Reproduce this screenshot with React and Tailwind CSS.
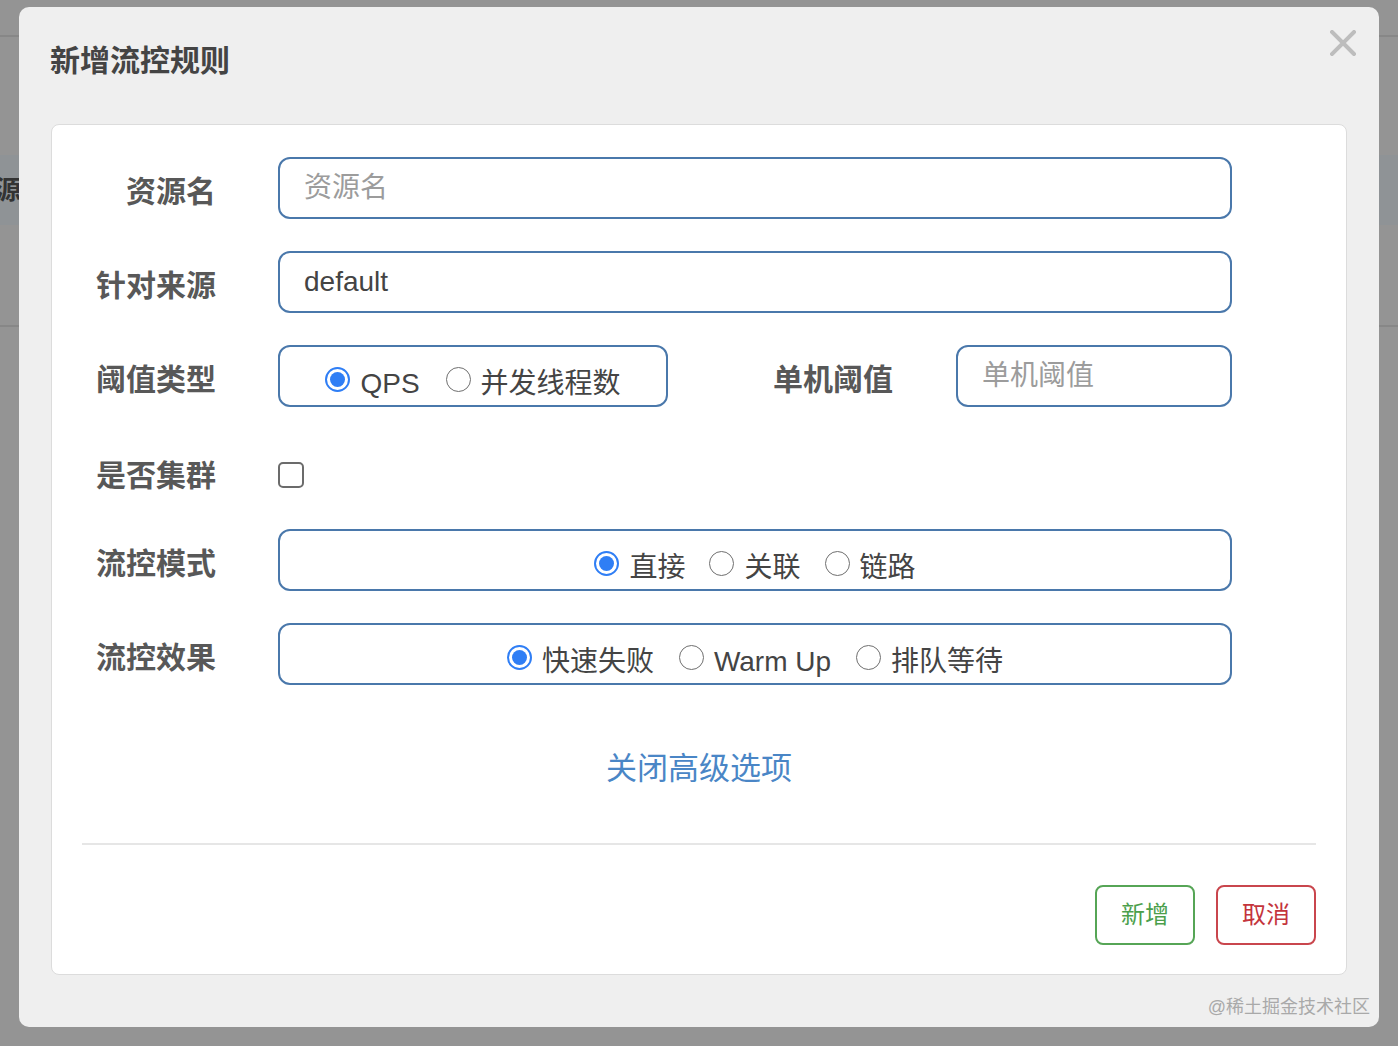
import React from 'react'

const font = { fontFamily: '"Liberation Sans", "Noto Sans CJK SC", sans-serif' }

function Radio({ checked, label }) {
  return (
    <label className="flex items-center gap-[10px] mt-[6px]">
      {checked ? (
        <span className="w-[25px] h-[25px] rounded-full border-2 border-[#2f7ef5] flex items-center justify-center bg-white">
          <span className="w-[15px] h-[15px] rounded-full bg-[#2f7ef5]" />
        </span>
      ) : (
        <span className="w-[25px] h-[25px] rounded-full border-[1.5px] border-[#6f6f6f] bg-white" />
      )}
      <span className="text-[28px] leading-[40px] text-[#444] mt-[10px]">{label}</span>
    </label>
  )
}

function Label({ children, className = 'w-[164px]' }) {
  return (
    <div className={`${className} shrink-0 text-right text-[30px] leading-[40px] font-bold text-[#585858] pt-[8px]`}>
      {children}
    </div>
  )
}

function Row({ label, children, className = 'h-[62px]' }) {
  return (
    <div className={`flex items-center ${className}`}>
      <Label>{label}</Label>
      <div className="ml-[62px] flex items-center">{children}</div>
    </div>
  )
}

const boxCls = 'h-[62px] border-2 border-[#4a78ab] rounded-[12px] bg-white'
const inputCls = `${boxCls} px-[24px] text-[28px] text-[#444] placeholder:text-[#9c9c9c] outline-none`

export default function App() {
  return (
    <div className="relative w-[1398px] h-[1046px] overflow-hidden bg-[#949494]" style={font}>
      {/* page behind the overlay */}
      <div className="h-[35px]" />
      <div className="h-[2px] bg-[#878787]" />
      <div className="h-[118px]" />
      <div className="h-[70px] bg-[#8f9396] flex items-center">
        <span className="ml-[-5px] text-[26px] font-bold text-[#333]">源</span>
      </div>
      <div className="h-[100px]" />
      <div className="h-[2px] bg-[#878787]" />

      {/* modal */}
      <div className="absolute left-[19px] top-[7px] w-[1360px] h-[1020px] rounded-[10px] bg-[#efefef]">
        <div className="h-[117px] pt-[34px] pl-[31px]">
          <h2 className="text-[30px] leading-[40px] font-bold text-[#444]">新增流控规则</h2>
        </div>
        <button className="absolute right-[23px] top-[23px] w-[26px] h-[26px]">
          <svg viewBox="0 0 26 26" className="w-[26px] h-[26px]">
            <path d="M2 2 L24 24 M24 2 L2 24" stroke="#bdbdbd" strokeWidth="4" strokeLinecap="square" />
          </svg>
        </button>

        <div className="ml-[32px] w-[1296px] h-[851px] rounded-[8px] border border-[#dcdcdc] bg-white pt-[32px]">
          <div className="flex flex-col gap-[32px]">
            <Row label="资源名">
              <input className={`${inputCls} w-[954px]`} placeholder="资源名" />
            </Row>
            <Row label="针对来源">
              <input className={`${inputCls} w-[954px]`} defaultValue="default" />
            </Row>
            <Row label="阈值类型">
              <div className={`${boxCls} w-[390px] flex items-center justify-center gap-[26px]`}>
                <Radio checked label="QPS" />
                <Radio label="并发线程数" />
              </div>
              <Label className="w-[225px]">单机阈值</Label>
              <input className={`${inputCls} w-[276px] ml-[63px]`} placeholder="单机阈值" />
            </Row>
            <Row label="是否集群" className="h-[58px] pt-[8px]">
              <span className="w-[26px] h-[26px] rounded-[5px] border-2 border-[#6b6b6b] mt-[6px]" />
            </Row>
            <Row label="流控模式">
              <div className={`${boxCls} w-[954px] flex items-center justify-center gap-[24px]`}>
                <Radio checked label="直接" />
                <Radio label="关联" />
                <Radio label="链路" />
              </div>
            </Row>
            <Row label="流控效果">
              <div className={`${boxCls} w-[954px] flex items-center justify-center gap-[25px]`}>
                <Radio checked label="快速失败" />
                <Radio label="Warm Up" />
                <Radio label="排队等待" />
              </div>
            </Row>
          </div>

          <div className="mt-[64px] text-center text-[31px] leading-[40px] text-[#4a86c6]">关闭高级选项</div>

          <div className="mx-[30px] mt-[54px] h-[2px] bg-[#e6e6e6]" />

          <div className="mt-[40px] pr-[30px] flex justify-end gap-[21px]">
            <button className="w-[100px] h-[60px] rounded-[8px] border-2 border-[#56a556] text-[24px] text-[#4c9f4c] bg-white">
              新增
            </button>
            <button className="w-[100px] h-[60px] rounded-[8px] border-2 border-[#c9464d] text-[24px] text-[#c4343c] bg-white">
              取消
            </button>
          </div>
        </div>

        <div className="absolute right-[9px] bottom-[8px] text-[18px] leading-[24px] text-[#a9a9a9]">@稀土掘金技术社区</div>
      </div>
    </div>
  )
}
